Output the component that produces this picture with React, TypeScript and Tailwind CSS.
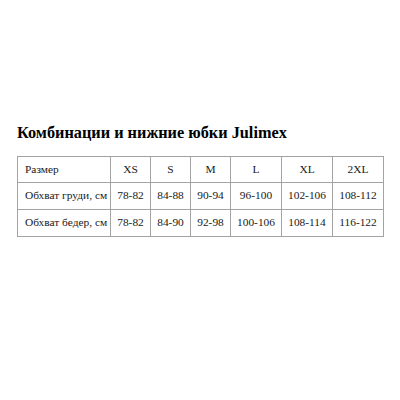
const sizes = ["XS", "S", "M", "L", "XL", "2XL"];
const rows = [
  { label: "Обхват груди, см", values: ["78-82", "84-88", "90-94", "96-100", "102-106", "108-112"] },
  { label: "Обхват бедер, см", values: ["78-82", "84-90", "92-98", "100-106", "108-114", "116-122"] },
];
const widths = ["w-[40px]", "w-[40px]", "w-[40px]", "w-[51px]", "w-[51px]", "w-[51px]"];

export default function App() {
  return (
    <div className="w-[400px] h-[400px] bg-white font-['Liberation_Serif',serif] text-[#1a1a1a]">
      <div className="pt-[123px] pl-[17px]">
        <h1 className="text-[16.3px] font-bold leading-[20px] text-black">
          Комбинации и нижние юбки Julimex
        </h1>
        <table className="mt-[13px] w-[367px] table-fixed border-collapse text-[11.4px]">
          <colgroup>
            <col className="w-[93px]" />
            {widths.map((w, i) => (
              <col key={i} className={w} />
            ))}
          </colgroup>
          <tbody>
            <tr className="h-[26px]">
              <td className="border border-[#a3a3a3] pl-[7px]">Размер</td>
              {sizes.map((s) => (
                <td key={s} className="border border-[#a3a3a3] text-center">
                  {s}
                </td>
              ))}
            </tr>
            {rows.map((r) => (
              <tr key={r.label} className="h-[27px]">
                <td className="border border-[#a3a3a3] pl-[7px] whitespace-nowrap">{r.label}</td>
                {r.values.map((v, i) => (
                  <td key={i} className="border border-[#a3a3a3] text-center">
                    {v}
                  </td>
                ))}
              </tr>
            ))}
          </tbody>
        </table>
      </div>
    </div>
  );
}
